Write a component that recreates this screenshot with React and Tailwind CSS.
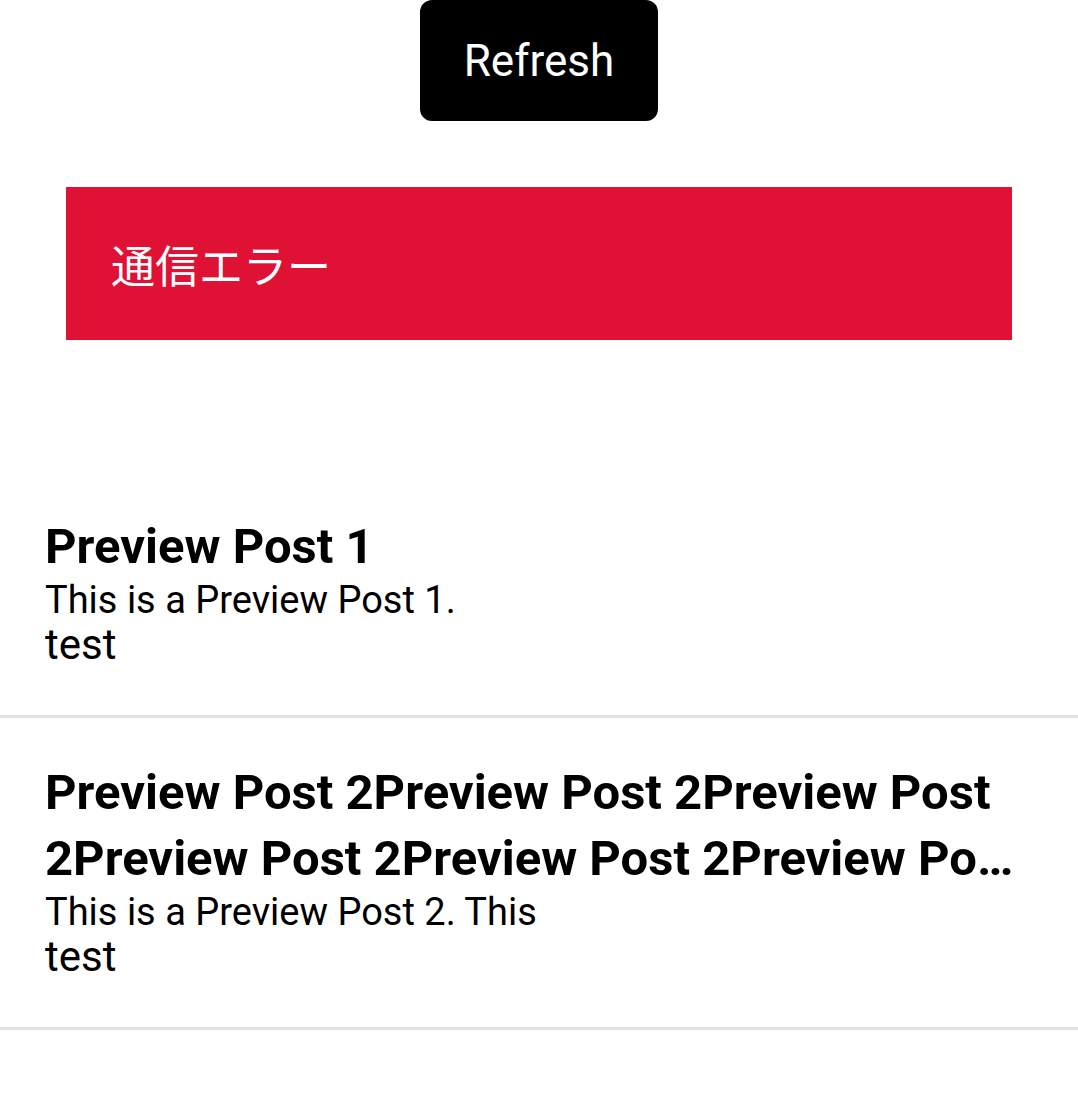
import React from 'react'

const posts = [
  {
    id: 1,
    title: 'Preview Post 1',
    body: 'This is a Preview Post 1.',
    tag: 'test',
  },
  {
    id: 2,
    title:
      'Preview Post 2Preview Post 2Preview Post 2Preview Post 2Preview Post 2Preview Post 2Preview Post 2Preview Post 2',
    body: 'This is a Preview Post 2. This',
    tag: 'test',
  },
]

const PostItem = ({ post }) => (
  <div className="border-b-[3px] border-[#e2e2e2] pl-[45px] pr-[40px] pt-[42px] pb-[45px]">
    <h2 className="line-clamp-2 text-[49px] font-bold leading-[66px] text-black">
      {post.title}
    </h2>
    <p className="text-[38px] leading-[40px] text-black">{post.body}</p>
    <p className="text-[42px] leading-[50px] text-black">{post.tag}</p>
  </div>
)

export default function App() {
  return (
    <div
      className="min-h-screen bg-white"
      style={{ fontFamily: 'Roboto, "Noto Sans CJK JP", sans-serif' }}
    >
      <div className="flex justify-center">
        <button className="h-[121px] w-[238px] rounded-[12px] bg-black text-[44px] text-white">
          Refresh
        </button>
      </div>

      <div className="mx-[66px] mt-[66px] flex h-[153px] items-center bg-[#df1134] pl-[45px]">
        <span className="text-[44px] text-white" style={{ fontFamily: '"Noto Sans CJK JP", sans-serif' }}>
          通信エラー
        </span>
      </div>

      <div className="mt-[132px]">
        {posts.map((post) => (
          <PostItem key={post.id} post={post} />
        ))}
      </div>
    </div>
  )
}
